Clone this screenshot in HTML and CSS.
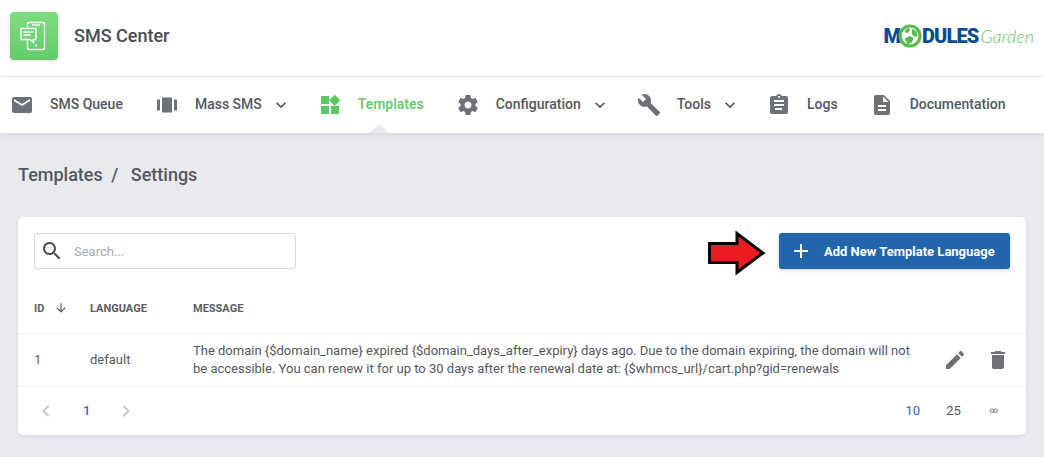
FILE: index.html
```html
<!DOCTYPE html>
<html>
<head>
  <title>SMS Center - Templates</title>
  <link rel="stylesheet" href="styles.css">
</head>
<body>
  <div class="top">
    <div class="brand">
      <div class="tile">
        <svg width="48" height="48" viewBox="0 0 48 48" fill="none" stroke="#fff" stroke-width="1.3">
          <rect x="17.5" y="10.5" width="17" height="27" rx="1.5"/>
          <path d="M22 13h8" />
          <circle cx="26" cy="33.500" r="1" fill="#fff" stroke="none"/>
          <path d="M11 16.500h15v11h-2.500v3l-3.500-3h-9z" fill="#70d474" stroke-width="1.5"/>
          <path d="M13.500 20h10M13.500 23h7"/>
        </svg>
      </div>
      <div class="app-name">SMS Center</div>
    </div>
    <div class="logo">
      <span class="logo-bold">M</span>
      <svg class="globe" width="24" height="24" viewBox="0 0 26 26">
        <circle cx="13" cy="13" r="10.800" fill="#fff" stroke="#55bd4f" stroke-width="3.400"/>
        <path d="M8 6l4-2 1 3-3 3-2-1zM15 5l5 3 1 5-3 1-3-3zM7 16l6-3 4 2-2 5-5 2-1-3z" fill="#55bd4f"/>
      </svg>
      <span class="logo-bold">DULES</span>
      <span class="logo-thin">Garden</span>
    </div>
  </div>

  <div class="nav">
    <div class="nav-item">
      <svg class="icon" viewBox="0 0 24 24"><path d="M20 4H4c-1.100 0-1.990.9-1.990 2L2 18c0 1.100.9 2 2 2h16c1.100 0 2-.9 2-2V6c0-1.100-.9-2-2-2zm0 4l-8 5-8-5V6l8 5 8-5v2z"/></svg>
      <span>SMS Queue</span>
    </div>
    <div class="nav-item">
      <svg class="icon" viewBox="0 0 24 24"><path d="M2 17.500h3v-11H2zM19 6.500v11h3v-11zM7 19.500h10v-15H7z"/></svg>
      <span>Mass SMS</span>
      <svg class="caret" viewBox="0 0 24 24"><path d="M7.410 8.590L12 13.170l4.590-4.580L18 10l-6 6-6-6z"/></svg>
    </div>
    <div class="nav-item active">
      <svg class="icon" viewBox="0 0 24 24"><path d="M13 13v8h8v-8h-8zM3 21h8v-8H3v8zM3 3v8h8V3H3zm13.660-1.310L11 7.340 16.660 13l5.660-5.660-5.660-5.650z"/></svg>
      <span>Templates</span>
    </div>
    <div class="nav-item">
      <svg class="icon" viewBox="0 0 24 24"><path d="M19.43 12.98c.04-.32.07-.64.07-.98s-.03-.66-.07-.98l2.11-1.65c.19-.15.24-.42.12-.64l-2-3.46c-.12-.22-.39-.3-.61-.22l-2.49 1c-.52-.4-1.08-.73-1.69-.98l-.38-2.65C14.46 2.18 14.25 2 14 2h-4c-.25 0-.46.18-.49.42l-.38 2.65c-.61.25-1.17.59-1.69.98l-2.49-1c-.23-.09-.49 0-.61.22l-2 3.46c-.13.22-.07.49.12.64l2.11 1.65c-.04.32-.07.65-.07.98s.03.66.07.98l-2.11 1.65c-.19.15-.24.42-.12.64l2 3.46c.12.22.39.3.61.22l2.49-1c.52.4 1.08.73 1.69.98l.38 2.65c.03.24.24.42.49.42h4c.25 0 .46-.18.49-.42l.38-2.65c.61-.25 1.17-.59 1.69-.98l2.49 1c.23.09.49 0 .61-.22l2-3.46c.12-.22.07-.49-.12-.64l-2.11-1.65zM12 15.5c-1.93 0-3.5-1.57-3.5-3.5s1.57-3.5 3.5-3.5 3.5 1.57 3.5 3.5-1.57 3.5-3.5 3.5z"/></svg>
      <span>Configuration</span>
      <svg class="caret" viewBox="0 0 24 24"><path d="M7.410 8.590L12 13.170l4.590-4.580L18 10l-6 6-6-6z"/></svg>
    </div>
    <div class="nav-item">
      <svg class="icon" viewBox="0 0 24 24"><path d="M22.7 19l-9.1-9.1c.9-2.3.4-5-1.5-6.9-2-2-5-2.4-7.4-1.3L9 6 6 9 1.6 4.7C.4 7.1.9 10.1 2.9 12.1c1.9 1.9 4.6 2.4 6.9 1.5l9.1 9.1c.4.4 1 .4 1.4 0l2.3-2.3c.5-.4.5-1.1.1-1.4z"/></svg>
      <span>Tools</span>
      <svg class="caret" viewBox="0 0 24 24"><path d="M7.410 8.590L12 13.170l4.590-4.580L18 10l-6 6-6-6z"/></svg>
    </div>
    <div class="nav-item">
      <svg class="icon" viewBox="0 0 24 24"><path d="M19 3h-4.180C14.400 1.840 13.300 1 12 1c-1.300 0-2.400.84-2.820 2H5c-1.100 0-2 .9-2 2v14c0 1.100.9 2 2 2h14c1.100 0 2-.9 2-2V5c0-1.100-.9-2-2-2zm-7 0c.55 0 1 .45 1 1s-.45 1-1 1-1-.45-1-1 .45-1 1-1zm3 14H8v-2h7v2zm2-4H7v-2h10v2zm0-4H7V7h10v2z"/></svg>
      <span>Logs</span>
    </div>
    <div class="nav-item">
      <svg class="icon" viewBox="0 0 24 24"><path d="M14 2H6c-1.100 0-1.990.9-1.990 2L4 20c0 1.100.89 2 1.990 2H18c1.100 0 2-.9 2-2V8l-6-6zm2 16H8v-2h8v2zm0-4H8v-2h8v2zm-3-5V3.500L18.500 9H13z"/></svg>
      <span>Documentation</span>
    </div>
  </div>

  <div class="content">
    <div class="breadcrumb">
      <span>Templates</span>
      <span class="sep">/</span>
      <span>Settings</span>
    </div>

    <div class="card">
      <div class="toolbar">
        <div class="search">
          <svg class="search-icon" viewBox="0 0 24 24"><path d="M15.5 14h-.79l-.28-.27C15.41 12.59 16 11.11 16 9.5 16 5.91 13.09 3 9.5 3S3 5.91 3 9.5 5.91 16 9.5 16c1.61 0 3.09-.59 4.23-1.57l.27.28v.79l5 4.99L20.49 19l-4.99-5zm-6 0C7.01 14 5 11.99 5 9.5S7.01 5 9.5 5 14 7.01 14 9.5 11.99 14 9.5 14z"/></svg>
          <span>Search...</span>
        </div>
        <div class="button">
          <svg class="plus" viewBox="0 0 24 24"><path d="M19 13h-6v6h-2v-6H5v-2h6V5h2v6h6v2z"/></svg>
          <span>Add New Template Language</span>
        </div>
      </div>

      <table>
        <thead>
          <tr>
            <th class="col-id">ID<svg class="sort" viewBox="0 0 24 24"><path d="M20 12l-1.410-1.410L13 16.170V4h-2v12.170l-5.580-5.590L4 12l8 8 8-8z"/></svg></th>
            <th class="col-lang">Language</th>
            <th class="col-msg">Message</th>
            <th></th>
          </tr>
        </thead>
        <tbody>
          <tr>
            <td class="link">1</td>
            <td>default</td>
            <td>The domain {$domain_name} expired {$domain_days_after_expiry} days ago. Due to the domain expiring, the domain will not be accessible. You can renew it for up to 30 days after the renewal date at: {$whmcs_url}/cart.php?gid=renewals</td>
            <td class="actions">
              <svg class="action" viewBox="0 0 24 24"><path d="M3 17.250V21h3.750L17.810 9.940l-3.750-3.750L3 17.250zM20.710 7.040c.39-.39.39-1.020 0-1.410l-2.340-2.340c-.39-.39-1.020-.39-1.410 0l-1.830 1.830 3.750 3.750 1.830-1.830z"/></svg>
              <svg class="action" viewBox="0 0 24 24"><path d="M6 19c0 1.100.9 2 2 2h8c1.100 0 2-.9 2-2V7H6v12zM19 4h-3.500l-1-1h-5l-1 1H5v2h14V4z"/></svg>
            </td>
          </tr>
        </tbody>
      </table>

      <div class="pager">
        <div class="pages">
          <svg class="chev" viewBox="0 0 24 24"><path d="M15.410 7.410L14 6l-6 6 6 6 1.410-1.410L10.830 12z"/></svg>
          <span class="link">1</span>
          <svg class="chev" viewBox="0 0 24 24"><path d="M10 6L8.590 7.410 13.170 12l-4.580 4.590L10 18l6-6z"/></svg>
        </div>
        <div class="sizes">
          <span class="link">10</span>
          <span>25</span>
          <span class="inf">∞</span>
        </div>
      </div>
    </div>
  </div>

  <svg class="red-arrow" width="64" height="50" viewBox="0 0 64 50">
    <path d="M3.500 15.500H31V5.500L57 25 31 44.500V34.500H3.500z" fill="#ed1c24" stroke="#000" stroke-width="3"/>
  </svg>
</body>
</html>
```

FILE: styles.css
```css
html, body { margin: 0; padding: 0; }
body { font-family: Roboto, Arial, sans-serif; background: #e9eaef; color: #55575e; height: 457px; overflow: hidden; position: relative; }

.top { background: #fff; height: 76px; box-sizing: content-box; border-bottom: 1px solid #eeeff2; display: flex; align-items: center; justify-content: space-between; padding: 0 10px; }
.brand { display: flex; align-items: center; margin-top: -4px; }
.tile { width: 48px; height: 48px; border-radius: 4px; background: linear-gradient(180deg, #7ddd80, #63cc69); box-shadow: 0 1px 4px rgba(0,0,0,.12); }
.tile svg { display: block; }
.app-name { margin-left: 16px; font-size: 18px; font-weight: 500; color: #4a4c54; margin-top: -1px; }

.logo { display: flex; align-items: center; margin-top: -4px; }
.logo-bold { font-weight: 900; font-size: 20px; color: #0b4b92; letter-spacing: -.9px; }
.globe { margin: 0 0 0 -2px; }
.logo-thin { font-family: Lato, Arial, sans-serif; font-weight: 300; font-style: italic; font-size: 18px; color: #66c862; margin-left: 2px; }

.nav { background: #fff; height: 56px; display: flex; align-items: center; padding-left: 10px; gap: 32px; box-shadow: 0 1px 6px rgba(0,0,0,.1); position: relative; }
.nav-item { display: flex; align-items: center; font-size: 14px; font-weight: 500; color: #55575e; position: relative; height: 56px; box-sizing: border-box; }
.nav-item span { margin-top: -2px; }
.icon { width: 24px; height: 24px; fill: #6f7179; margin-right: 16px; }
.caret { width: 20px; height: 20px; fill: #55575e; margin-left: 9px; margin-right: -5px; }
.active { color: #62c866; }
.active .icon { fill: #5cc861; }
.active:after { content: ""; position: absolute; left: 50%; bottom: 0; margin-left: -2px; border-left: 10px solid transparent; border-right: 10px solid transparent; border-bottom: 9px solid #e9eaef; }

.content { padding: 29px 18px 22px; }
.breadcrumb { font-size: 18px; font-weight: 500; color: #55575e; height: 26px; line-height: 26px; margin-bottom: 29px; }
.sep { margin: 0 8px 0 4px; }

.card { background: #fff; border-radius: 5px; box-shadow: 0 1px 5px rgba(0,0,0,.08); height: 218px; }
.toolbar { display: flex; justify-content: space-between; padding: 16px 16px 0; }
.search { width: 262px; height: 36px; box-sizing: border-box; border: 1px solid #d9dae3; border-radius: 3px; display: flex; align-items: center; padding-left: 5px; font-size: 13px; color: #a9abb1; }
.search-icon { width: 24px; height: 24px; fill: #4d4f57; margin-right: 10px; }
.button { width: 231px; height: 36px; background: #2265ab; border-radius: 3px; color: #fff; font-size: 13px; font-weight: 700; display: flex; align-items: center; box-shadow: 0 1px 4px rgba(0,0,0,.2); padding-left: 10px; box-sizing: border-box; }
.plus { width: 24px; height: 24px; fill: #fff; margin-right: 11px; }

table { width: 100%; border-collapse: collapse; table-layout: fixed; }
th { height: 64px; padding: 16px 16px 0; font-size: 11px; font-weight: 700; text-transform: uppercase; text-align: left; color: #5b5d65; box-sizing: border-box; border-bottom: 1px solid #eeeff2; white-space: nowrap; }
th svg { vertical-align: middle; }
.col-id { width: 56px; }
.col-lang { width: 103px; }
.col-msg { width: 749px; }
.sort { width: 14px; height: 14px; fill: #55575e; margin-left: 10px; margin-top: -2px; }
td { height: 53px; box-sizing: border-box; padding: 0 16px; font-size: 13px; line-height: 18px; color: #55575e; border-bottom: 1px solid #eeeff2; }
td.link { color: #2c6cb3; }
.actions { padding: 0 0 0 17px; white-space: nowrap; }
.action { width: 24px; height: 24px; fill: #6f7179; vertical-align: middle; }
.action + .action { margin-left: 16px; }

.pager { display: flex; justify-content: space-between; align-items: center; height: 48px; font-size: 13px; padding: 0 28px 0 16px; }
.pages { display: flex; align-items: center; }
.chev { width: 24px; height: 24px; fill: #c9cad0; }
.pages .link { margin: 0 25px; width: 6px; font-weight: 500; }
.link { color: #2c6cb3; }
.sizes { display: flex; gap: 26px; align-items: center; }
.inf { font-size: 8px; margin-left: 3px; }

.red-arrow { position: absolute; left: 706px; top: 228px; }
```
